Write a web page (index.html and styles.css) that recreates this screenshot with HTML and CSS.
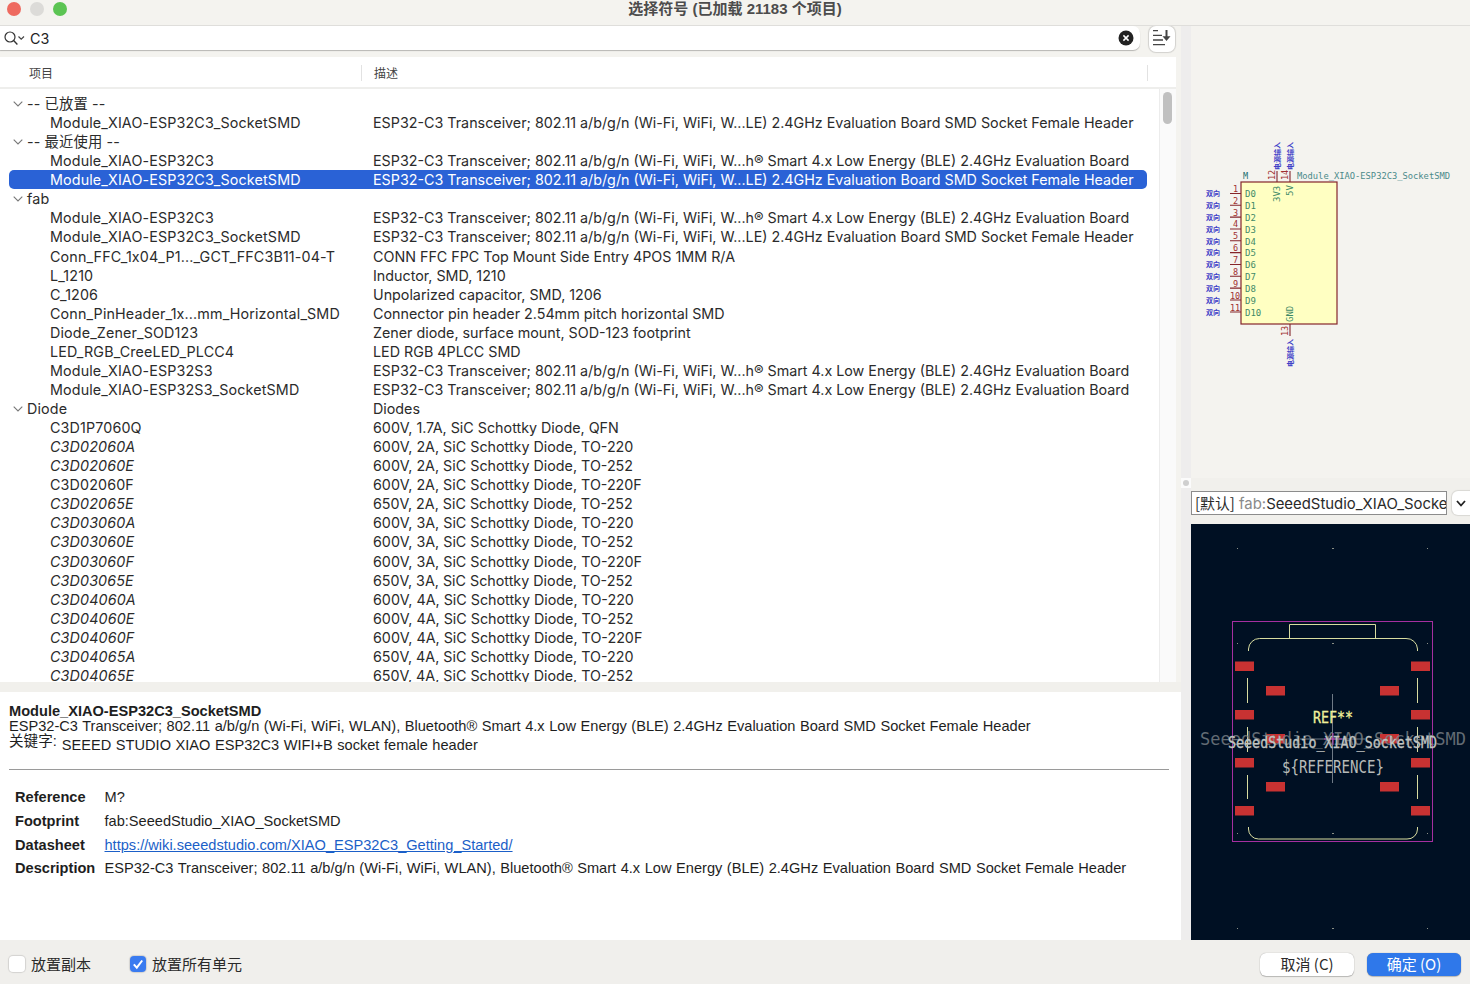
FILE: index.html
```html
<!DOCTYPE html>
<html lang="zh">
<head>
<meta charset="utf-8">
<title>选择符号</title>
<link rel="stylesheet" href="styles.css">
</head>
<body>
<div class="window">
  <header class="titlebar">
    <div class="lights"><span class="light red"></span><span class="light grey"></span><span class="light green"></span></div>
    <div class="title">选择符号 (已加载 21183 个项目)</div>
  </header>
  <div class="main">
    <div class="left">
      <div class="searchrow">
        <div class="search">
          <svg class="search-ic" width="22" height="16" viewBox="0 0 22 16"><circle cx="7" cy="7" r="5" fill="none" stroke="#333" stroke-width="1.2"/><path d="M10.6 10.6 14.4 14.4" stroke="#333" stroke-width="1.4" fill="none"/><path d="M15.5 6.5 18.2 9.2 21 6.5" stroke="#444" stroke-width="1.2" fill="none"/></svg>
          <span class="search-text">C3</span>
          <svg class="clear-ic" width="16" height="16" viewBox="0 0 16 16"><circle cx="8" cy="8" r="7.5" fill="#222"/><path d="M5.4 5.4 10.6 10.6M10.6 5.4 5.4 10.6" stroke="#fff" stroke-width="1.5"/></svg>
        </div>
        <div class="sortbtn">
          <svg width="20" height="20" viewBox="0 0 20 20"><path d="M1 1.7H6M1 6.3H10M1 11H11M1 15.7H13" stroke="#444" stroke-width="1.3" fill="none"/><path d="M14.5 1V8" stroke="#444" stroke-width="2" fill="none"/><path d="M10.5 7.2H18.5L14.5 12Z" fill="#444"/></svg>
        </div>
      </div>
      <div class="listpane">
        <div class="listhead">
          <div class="hcell hcell-a">项目</div>
          <div class="hcell hcell-b">描述</div>
          <div class="hcell hcell-c"></div>
        </div>
        <div class="listbody">
          <div class="rows" id="rows">
            <div class="row group"><span class="name"><svg class="chev" width="10" height="6" viewBox="0 0 10 6"><path d="M.7.7 5 5 9.3.7"/></svg>-- 已放置 --</span><span></span></div>
            <div class="row"><span class="name">Module_XIAO-ESP32C3_SocketSMD</span><span>ESP32-C3 Transceiver; 802.11 a/b/g/n (Wi-Fi, WiFi, W...LE) 2.4GHz Evaluation Board SMD Socket Female Header</span></div>
            <div class="row group"><span class="name"><svg class="chev" width="10" height="6" viewBox="0 0 10 6"><path d="M.7.7 5 5 9.3.7"/></svg>-- 最近使用 --</span><span></span></div>
            <div class="row"><span class="name">Module_XIAO-ESP32C3</span><span>ESP32-C3 Transceiver; 802.11 a/b/g/n (Wi-Fi, WiFi, W...h® Smart 4.x Low Energy (BLE) 2.4GHz Evaluation Board</span></div>
            <div class="row selected"><span class="name">Module_XIAO-ESP32C3_SocketSMD</span><span>ESP32-C3 Transceiver; 802.11 a/b/g/n (Wi-Fi, WiFi, W...LE) 2.4GHz Evaluation Board SMD Socket Female Header</span></div>
            <div class="row group"><span class="name"><svg class="chev" width="10" height="6" viewBox="0 0 10 6"><path d="M.7.7 5 5 9.3.7"/></svg>fab</span><span></span></div>
            <div class="row"><span class="name">Module_XIAO-ESP32C3</span><span>ESP32-C3 Transceiver; 802.11 a/b/g/n (Wi-Fi, WiFi, W...h® Smart 4.x Low Energy (BLE) 2.4GHz Evaluation Board</span></div>
            <div class="row"><span class="name">Module_XIAO-ESP32C3_SocketSMD</span><span>ESP32-C3 Transceiver; 802.11 a/b/g/n (Wi-Fi, WiFi, W...LE) 2.4GHz Evaluation Board SMD Socket Female Header</span></div>
            <div class="row"><span class="name">Conn_FFC_1x04_P1..._GCT_FFC3B11-04-T</span><span>CONN FFC FPC Top Mount Side Entry 4POS 1MM R/A</span></div>
            <div class="row"><span class="name">L_1210</span><span>Inductor, SMD, 1210</span></div>
            <div class="row"><span class="name">C_1206</span><span>Unpolarized capacitor, SMD, 1206</span></div>
            <div class="row"><span class="name">Conn_PinHeader_1x...mm_Horizontal_SMD</span><span>Connector pin header 2.54mm pitch horizontal SMD</span></div>
            <div class="row"><span class="name">Diode_Zener_SOD123</span><span>Zener diode, surface mount, SOD-123 footprint</span></div>
            <div class="row"><span class="name">LED_RGB_CreeLED_PLCC4</span><span>LED RGB 4PLCC SMD</span></div>
            <div class="row"><span class="name">Module_XIAO-ESP32S3</span><span>ESP32-C3 Transceiver; 802.11 a/b/g/n (Wi-Fi, WiFi, W...h® Smart 4.x Low Energy (BLE) 2.4GHz Evaluation Board</span></div>
            <div class="row"><span class="name">Module_XIAO-ESP32S3_SocketSMD</span><span>ESP32-C3 Transceiver; 802.11 a/b/g/n (Wi-Fi, WiFi, W...h® Smart 4.x Low Energy (BLE) 2.4GHz Evaluation Board</span></div>
            <div class="row group"><span class="name"><svg class="chev" width="10" height="6" viewBox="0 0 10 6"><path d="M.7.7 5 5 9.3.7"/></svg>Diode</span><span>Diodes</span></div>
            <div class="row"><span class="name">C3D1P7060Q</span><span>600V, 1.7A, SiC Schottky Diode, QFN</span></div>
            <div class="row"><span class="name it">C3D02060A</span><span>600V, 2A, SiC Schottky Diode, TO-220</span></div>
            <div class="row"><span class="name it">C3D02060E</span><span>600V, 2A, SiC Schottky Diode, TO-252</span></div>
            <div class="row"><span class="name">C3D02060F</span><span>600V, 2A, SiC Schottky Diode, TO-220F</span></div>
            <div class="row"><span class="name it">C3D02065E</span><span>650V, 2A, SiC Schottky Diode, TO-252</span></div>
            <div class="row"><span class="name it">C3D03060A</span><span>600V, 3A, SiC Schottky Diode, TO-220</span></div>
            <div class="row"><span class="name it">C3D03060E</span><span>600V, 3A, SiC Schottky Diode, TO-252</span></div>
            <div class="row"><span class="name it">C3D03060F</span><span>600V, 3A, SiC Schottky Diode, TO-220F</span></div>
            <div class="row"><span class="name it">C3D03065E</span><span>650V, 3A, SiC Schottky Diode, TO-252</span></div>
            <div class="row"><span class="name it">C3D04060A</span><span>600V, 4A, SiC Schottky Diode, TO-220</span></div>
            <div class="row"><span class="name it">C3D04060E</span><span>600V, 4A, SiC Schottky Diode, TO-252</span></div>
            <div class="row"><span class="name it">C3D04060F</span><span>600V, 4A, SiC Schottky Diode, TO-220F</span></div>
            <div class="row"><span class="name it">C3D04065A</span><span>650V, 4A, SiC Schottky Diode, TO-220</span></div>
            <div class="row"><span class="name it">C3D04065E</span><span>650V, 4A, SiC Schottky Diode, TO-252</span></div>
          </div>
          <div class="scrolltrack"><div class="thumb"></div></div>
        </div>
      </div>
      <div class="sash-h"></div>
      <div class="details">
        <div class="d-title">Module_XIAO-ESP32C3_SocketSMD</div>
        <div class="d-line">ESP32-C3 Transceiver; 802.11 a/b/g/n (Wi-Fi, WiFi, WLAN), Bluetooth® Smart 4.x Low Energy (BLE) 2.4GHz Evaluation Board SMD Socket Female Header</div>
        <div class="d-line d-kw"><span class="kw-label">关键字:</span> <span>SEEED STUDIO XIAO ESP32C3 WIFI+B socket female header</span></div>
        <hr class="d-rule">
        <div class="fields">
          <div class="f-k">Reference</div><div class="f-v">M?</div>
          <div class="f-k">Footprint</div><div class="f-v">fab:SeeedStudio_XIAO_SocketSMD</div>
          <div class="f-k">Datasheet</div><div class="f-v"><a class="link" href="#">https://wiki.seeedstudio.com/XIAO_ESP32C3_Getting_Started/</a></div>
          <div class="f-k">Description</div><div class="f-v">ESP32-C3 Transceiver; 802.11 a/b/g/n (Wi-Fi, WiFi, WLAN), Bluetooth® Smart 4.x Low Energy (BLE) 2.4GHz Evaluation Board SMD Socket Female Header</div>
        </div>
      </div>
    </div>
    <div class="vsash"><span class="grip"></span></div>
    <div class="right">
      <div class="sym">
        <svg class="fill-svg" width="279" height="452" viewBox="1191 26 279 452">
          <g class="sy-pin">
            <path d="M1230 193.5H1241M1230 205.3H1241M1230 217.1H1241M1230 229H1241M1230 240.8H1241M1230 252.6H1241M1230 264.5H1241M1230 276.3H1241M1230 288.1H1241M1230 300H1241M1230 312H1241M1277 171V182M1290 171V182M1290 324V336"/>
          </g>
          <rect x="1241" y="182" width="96" height="142" fill="#ffffc2" stroke="#84252a" stroke-width="1.2"/>
          <g class="sy-num">
            <text x="1233" y="192">1</text><text x="1233" y="203.5">2</text><text x="1233" y="215.5">3</text><text x="1233" y="227">4</text><text x="1233" y="239">5</text><text x="1233" y="251">6</text><text x="1233" y="263">7</text><text x="1233" y="274.5">8</text><text x="1233" y="286.5">9</text><text x="1230" y="298.5">10</text><text x="1230" y="310.5">11</text>
            <text transform="translate(1275 180) rotate(-90)">12</text>
            <text transform="translate(1288 180) rotate(-90)">14</text>
            <text transform="translate(1288 336) rotate(-90)">13</text>
          </g>
          <g class="sy-pn">
            <text x="1245" y="197">D0</text><text x="1245" y="209">D1</text><text x="1245" y="220.5">D2</text><text x="1245" y="232.5">D3</text><text x="1245" y="244.5">D4</text><text x="1245" y="256">D5</text><text x="1245" y="268">D6</text><text x="1245" y="280">D7</text><text x="1245" y="291.5">D8</text><text x="1245" y="303.5">D9</text><text x="1245" y="315.5">D10</text>
            <text transform="translate(1280 202) rotate(-90)">3V3</text>
            <text transform="translate(1293 196) rotate(-90)">5V</text>
            <text transform="translate(1293 322) rotate(-90)">GND</text>
          </g>
          <g class="sy-type">
            <text x="1206" y="196">双向</text><text x="1206" y="208">双向</text><text x="1206" y="219.5">双向</text><text x="1206" y="231.5">双向</text><text x="1206" y="243.5">双向</text><text x="1206" y="255">双向</text><text x="1206" y="267">双向</text><text x="1206" y="279">双向</text><text x="1206" y="290.5">双向</text><text x="1206" y="302.5">双向</text><text x="1206" y="314.5">双向</text>
            <text transform="translate(1280 170) rotate(-90)">电源输入</text>
            <text transform="translate(1293 170) rotate(-90)">电源输入</text>
            <text transform="translate(1293 367) rotate(-90)">电源输入</text>
          </g>
          <text class="sy-ref" x="1243" y="179">M</text>
          <text class="sy-name" x="1297" y="179" textLength="153" lengthAdjust="spacingAndGlyphs">Module_XIAO-ESP32C3_SocketSMD</text>
        </svg>
      </div>
      <div class="fp-select">
        <div class="fp-input"><span class="fp-def">[默认]</span> <span class="fp-lib">fab:</span>SeeedStudio_XIAO_Socke</div>
        <div class="fp-btn"><svg width="10" height="7" viewBox="0 0 10 7"><path d="M1 1 5 5.5 9 1" fill="none" stroke="#222" stroke-width="1.8"/></svg></div>
      </div>
      <div class="fp">
        <svg class="fill-svg" width="279" height="417" viewBox="1191 524 279 417">
          <g fill="#8a8f86">
            <rect x="1237" y="548" width="1" height="1"/><rect x="1332" y="548" width="2" height="1"/><rect x="1427" y="548" width="1" height="1"/>
            <rect x="1237" y="643" width="1" height="1"/><rect x="1332" y="643" width="2" height="1"/><rect x="1427" y="643" width="1" height="1"/>
            <rect x="1237" y="833" width="1" height="1"/><rect x="1332" y="833" width="2" height="1"/><rect x="1427" y="833" width="1" height="1"/>
            <rect x="1237" y="928" width="1" height="1"/><rect x="1332" y="928" width="2" height="1"/><rect x="1427" y="928" width="1" height="1"/>
          </g>
          <rect x="1232.5" y="621.5" width="200" height="220" fill="none" stroke="#a52fa0" stroke-width="1"/>
          <g fill="none" stroke="#d8dca0" stroke-width="1">
            <path d="M1289.5 638V624.5H1375.5V638"/>
            <path d="M1248.5 651V649A11 11 0 0 1 1259.5 638.5H1406A11 11 0 0 1 1417.5 649V651"/>
            <path d="M1247.5 678V703M1247.5 727V752M1247.5 775V799M1417.5 678V703M1417.5 727V752M1417.5 775V799"/>
            <path d="M1248.5 827V829A10 10 0 0 0 1258.5 839H1407A10 10 0 0 0 1417.5 829V827"/>
          </g>
          <g fill="#c83232">
            <rect x="1235" y="661.5" width="19" height="9.5"/><rect x="1235" y="710" width="19" height="9.5"/><rect x="1235" y="758" width="19" height="9.5"/><rect x="1235" y="806" width="19" height="9.5"/>
            <rect x="1411" y="661.5" width="19" height="9.5"/><rect x="1411" y="710" width="19" height="9.5"/><rect x="1411" y="758" width="19" height="9.5"/><rect x="1411" y="806" width="19" height="9.5"/>
            <rect x="1266" y="686" width="19" height="9.5"/><rect x="1266" y="734" width="19" height="9.5"/><rect x="1266" y="782" width="19" height="9.5"/>
            <rect x="1380" y="686" width="19" height="9.5"/><rect x="1380" y="734" width="19" height="9.5"/><rect x="1380" y="782" width="19" height="9.5"/>
          </g>
          <path d="M1332.5 694V783M1300 739H1365" stroke="#6f7a86" stroke-width="1" fill="none"/>
          <path d="M1324 739H1342M1333 733V745" stroke="#c040b8" stroke-width="1" fill="none"/>
          <text class="fp-t fp-big" x="1200" y="745" textLength="266" lengthAdjust="spacingAndGlyphs">SeeedStudio_XIAO_SocketSMD</text>
          <text class="fp-t fp-mid" x="1228" y="748" textLength="209" lengthAdjust="spacingAndGlyphs">SeeedStudio_XIAO_SocketSMD</text>
          <text class="fp-t fp-ref" x="1313" y="723" textLength="40" lengthAdjust="spacingAndGlyphs">REF**</text>
          <text class="fp-t fp-val" x="1282" y="773" textLength="102" lengthAdjust="spacingAndGlyphs">${REFERENCE}</text>
        </svg>
      </div>
    </div>
  </div>
  <footer class="footer">
    <label class="check"><span class="box"></span>放置副本</label>
    <label class="check check-2"><span class="box on"><svg width="16" height="16" viewBox="0 0 16 16"><path d="M3.8 8.3 6.8 11.6 12.2 4.5" fill="none" stroke="#fff" stroke-width="2"/></svg></span>放置所有单元</label>
    <div class="spacer"></div>
    <button class="btn">取消 (C)</button>
    <button class="btn primary">确定 (O)</button>
  </footer>
</div>
</body>
</html>
```
FILE: styles.css
```css
* { box-sizing: border-box; }
html, body { margin: 0; padding: 0; }
body { width: 1470px; height: 984px; overflow: hidden; background: #f4f3ef; font-family: Inter, "Noto Sans CJK SC", sans-serif; color: #2a2a2a; }
.window { width: 1470px; height: 984px; display: flex; flex-direction: column; }

.titlebar { height: 26px; flex: none; border-bottom: 1px solid #dfdedb; position: relative; background: #f4f3ef; }
.lights { position: absolute; left: 7px; top: 2px; display: flex; gap: 9px; }
.light { width: 14px; height: 14px; border-radius: 50%; display: block; }
.red { background: #ee6a5f; }
.grey { background: #dcdbd8; }
.green { background: #5bc453; }
.title { text-align: center; font: bold 15px/17px "Liberation Sans", "Noto Sans CJK SC", sans-serif; color: #4c4c4c; }

.main { flex: 1; min-height: 0; display: flex; }
.left { width: 1181px; flex: none; display: flex; flex-direction: column; }
.vsash { width: 10px; flex: none; background: #eeeded; position: relative; }
.grip { position: absolute; left: 0; top: 452px; width: 10px; height: 10px; background: #fbfbfb; }
.grip::after { content: ""; position: absolute; left: 2px; top: 2px; width: 6px; height: 6px; border-radius: 50%; background: #cfcfcf; }
.right { width: 279px; flex: none; display: flex; flex-direction: column; }

.searchrow { height: 31px; flex: none; display: flex; align-items: flex-start; background: #f4f3ef; padding-right: 5px; }
.search { width: 1140px; height: 24px; background: #fff; border-radius: 0 7px 7px 0; box-shadow: 0 1px 1px rgba(0,0,0,.25); display: flex; align-items: center; padding: 0 6px 0 3px; }
.search-ic { flex: none; }
.search-text { font-size: 14.3px; margin-left: 5px; flex: 1; color: #222; }
.clear-ic { flex: none; }
.sortbtn { width: 26px; height: 26px; margin-left: 9px; background: #fff; border-radius: 7px; box-shadow: 0 0 1px 1px rgba(0,0,0,.14); display: flex; align-items: center; justify-content: center; }

.listpane { flex: none; height: 625px; width: 1176px; display: flex; flex-direction: column; background: #fff; overflow: hidden; }
.listhead { height: 32px; flex: none; display: flex; align-items: center; padding-top: 1px; border-bottom: 2px solid #eeeeec; background: #fff; font: 12px/16px "Noto Sans CJK SC", sans-serif; color: #444; }
.hcell { height: 16px; border-right: 1px solid #e2e2e2; }
.hcell-a { width: 362px; padding-left: 29px; }
.hcell-b { width: 786px; padding-left: 12px; }
.hcell-c { border: 0; }

.listbody { flex: 1; min-height: 0; display: flex; overflow: hidden; }
.rows { width: 1159px; padding: 5px 12px 0 9px; overflow: hidden; }
.row { display: grid; grid-template-columns: 364px 1fr; height: 19.07px; align-items: center; font-size: 14.3px; line-height: 19px; white-space: nowrap; color: #2b2b2b; border-radius: 5px; }
.row .name { padding-left: 41px; letter-spacing: .14px; }
.row.group .name { padding-left: 4px; display: flex; align-items: center; }
.row .it { font-style: italic; }
.row.selected { background: #2a62d6; color: #fff; }
.chev { flex: none; margin-right: 4px; }
.chev path { fill: none; stroke: #777; stroke-width: 1.1; }

.scrolltrack { width: 17px; flex: none; background: #fafafa; border-left: 1px solid #ececec; padding: 3px 4px 0 3px; }
.thumb { width: 9px; height: 32px; background: #c0c0c0; border-radius: 5px; }

.sash-h { height: 10px; flex: none; background: #f1f0ec; }

.details { flex: 1; min-height: 0; background: #fff; padding: 11px 12px 0 9px; font: 14.6px/15px "Liberation Sans", "Noto Sans CJK SC", sans-serif; word-spacing: .5px; color: #1e1e1e; }
.d-title { font-weight: bold; line-height: 16px; word-spacing: 0; }
.d-line { white-space: nowrap; }
.d-kw { margin-top: 2px; display: flex; gap: 5px; line-height: 18px; }
.kw-label { position: relative; top: -4px; }
.d-rule { margin: 15px 0 0; border: 0; border-top: 1px solid #9a9a9a; }
.fields { display: grid; grid-template-columns: 89.5px 1fr; margin-top: 16px; padding-left: 6px; grid-auto-rows: 23.7px; align-items: center; }
.f-k { font-weight: bold; }
.f-v { white-space: nowrap; }
.link { color: #1b5fc8; text-decoration: underline; }

.sym { height: 452px; flex: none; background: #f4f3ef; }
.fill-svg { display: block; }
.sy-pin path { stroke: #84252a; stroke-width: 1.1; fill: none; }
.sy-num text { font: 8.5px "DejaVu Sans Mono", monospace; fill: #a03030; }
.sy-pn text { font: 9px "DejaVu Sans Mono", monospace; fill: #3f8a68; }
.sy-type text { font: bold 7px "Noto Sans CJK SC", sans-serif; fill: #4040c8; }
.sy-ref { font: 8.5px "DejaVu Sans Mono", monospace; fill: #1a6e6e; }
.sy-name { font: 9px "DejaVu Sans Mono", monospace; fill: #4a8a8a; }

.fp-select { height: 46px; flex: none; padding-top: 13px; display: flex; background: #f1f0ec; }
.fp-input { width: 256px; height: 24px; border: 1px solid #8c8c8c; background: #fff; font-size: 14.9px; line-height: 22px; padding-left: 3px; white-space: nowrap; overflow: hidden; color: #2a2a2a; }
.fp-def { font-family: "Noto Sans CJK SC", sans-serif; }
.fp-lib { color: #8a8a8a; }
.fp-btn { width: 18px; height: 24px; margin-left: 5px; background: #fff; border-radius: 6px 0 0 6px; box-shadow: 0 0 1px 1px rgba(0,0,0,.1); display: flex; align-items: center; justify-content: center; }

.fp { flex: 1; min-height: 0; background: #001023; overflow: hidden; }
.fp-t { font-family: "DejaVu Sans Mono", monospace; }
.fp-big { font-size: 18px; fill: #7b8288; opacity: .8; }
.fp-mid { font-size: 15px; fill: #c0c4c2; stroke: #c0c4c2; stroke-width: .3; }
.fp-ref { font-size: 15px; fill: #f0f09a; stroke: #f0f09a; stroke-width: .3; }
.fp-val { font-size: 17px; fill: #b6bab8; }

.footer { height: 44px; flex: none; display: flex; align-items: center; padding: 4px 9px 0 9px; background: #f0efec; font: 15px/20px "Noto Sans CJK SC", sans-serif; color: #2a2a2a; }
.check { display: flex; align-items: center; gap: 6px; }
.check-2 { margin-left: 39px; }
.box { width: 16px; height: 16px; background: #fff; border-radius: 4px; box-shadow: 0 0 1px 1px rgba(0,0,0,.12); display: block; }
.box.on { background: #3a7bf0; }
.box svg { display: block; }
.spacer { flex: 1; }
.btn { width: 94px; height: 23px; border: 0; border-radius: 6px; margin-left: 13px; background: #fff; box-shadow: 0 0 1px rgba(0,0,0,.4), 0 1px 1px rgba(0,0,0,.2); font: 15px/20px "Noto Sans CJK SC", sans-serif; color: #2a2a2a; padding: 0; }
.btn.primary { background: #2f78ea; color: #fff; }
```
